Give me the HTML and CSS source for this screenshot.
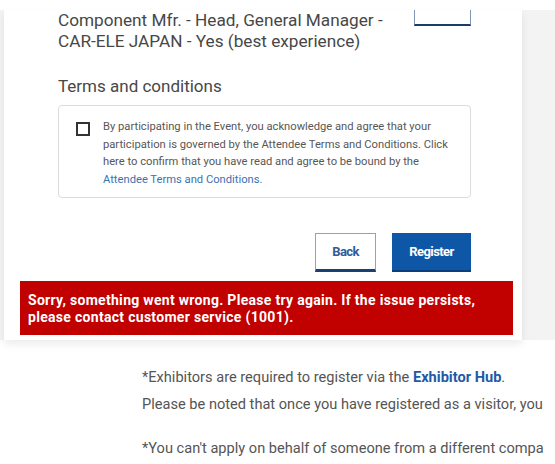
FILE: index.html
```html
<!DOCTYPE html>
<html>
<head>
    <title>Visitor registration</title>
    <link rel="stylesheet" href="styles.css">
</head>
<body>
    <div class="top-strip"></div>
    <div class="panel">
        <div class="card">
            <div class="form">
                <div class="answer-row">
                    <p class="answer">Component Mfr. - Head, General Manager - CAR-ELE JAPAN - Yes (best experience)</p>
                    <div class="edit-stub"></div>
                </div>

                <h2 class="section-title">Terms and conditions</h2>
                <label class="terms-box">
                    <span class="checkbox"></span>
                    <span class="terms-text">By participating in the Event, you acknowledge and agree that your participation is governed by the Attendee Terms and Conditions. Click here to confirm that you have read and agree to be bound by the <a href="#" class="terms-link">Attendee Terms and Conditions.</a></span>
                </label>

                <div class="actions">
                    <button type="button" class="btn btn-back">Back</button>
                    <button type="submit" class="btn btn-register">Register</button>
                </div>
            </div>
            <div class="alert">Sorry, something went wrong. Please try again. If the issue persists, please contact customer service (1001).</div>
        </div>
    </div>

    <div class="notes">
        <p>*Exhibitors are required to register via the <a href="#" class="hub-link">Exhibitor Hub</a>.<br>
        Please be noted that once you have registered as a visitor, you</p>
        <p>*You can't apply on behalf of someone from a different compa</p>
    </div>
</body>
</html>
```

FILE: styles.css
```css
html, body {
    overflow: hidden;
}
body {
    margin: 0;
    padding: 0;
    background-color: #fff;
    font-family: Roboto, "Liberation Sans", sans-serif;
    color: #4a4a4a;
}
.top-strip {
    height: 10px;
    background-color: #fff;
}
.panel {
    background-color: #f3f3f3;
    padding-left: 4px;
}
.card {
    width: 518px;
    background-color: #fff;
    padding-bottom: 5px;
    box-shadow: 0 4px 8px rgba(0, 0, 0, 0.08);
}
.form {
    padding: 0 51px 0 54px;
}
.answer-row {
    display: flex;
    justify-content: space-between;
    align-items: flex-start;
}
.answer {
    margin: 0;
    width: 345px;
    font-size: 17.2px;
    line-height: 21px;
    color: #474747;
}
.edit-stub {
    width: 55px;
    height: 14px;
    border: 1px solid #8094b5;
    border-top: none;
    border-bottom: 2px solid #1d3a6b;
}
.section-title {
    margin: 23px 0 8px;
    font-size: 17px;
    line-height: 22px;
    font-weight: normal;
    color: #474747;
}
.terms-box {
    display: flex;
    gap: 13px;
    padding: 12px 10px 8px 17px;
    border: 1px solid #dcdcdc;
    border-radius: 4px;
}
.checkbox {
    flex: none;
    width: 10px;
    height: 10px;
    margin-top: 4px;
    border: 2px solid #333;
}
.terms-text {
    font-size: 11.2px;
    line-height: 17.7px;
    color: #575757;
}
.terms-link {
    color: #3a72b4;
    text-decoration: none;
}
.actions {
    display: flex;
    justify-content: flex-end;
    gap: 16px;
    margin-top: 35px;
}
.btn {
    height: 39px;
    font-family: Roboto, "Liberation Sans", sans-serif;
    font-size: 13px;
    font-weight: bold;
    letter-spacing: -0.6px;
    cursor: pointer;
}
.btn-back {
    width: 61px;
    background-color: #fff;
    color: #2d5c9c;
    border: 1px solid #8ea3c4;
    border-bottom: 3px solid #1b3f73;
}
.btn-register {
    width: 79px;
    background-color: #0d57a6;
    color: #fff;
    border: none;
    border-bottom: 2px solid #0a3f7a;
}
.alert {
    margin: 9px 9px 0 16px;
    padding: 11px 8px 9px;
    background-color: #c10000;
    color: #fff;
    font-size: 14px;
    font-weight: bold;
    line-height: 17px;
    letter-spacing: 0.3px;
}
.notes {
    padding: 24px 0 0 142px;
    font-size: 14.6px;
    line-height: 27px;
    color: #555;
    white-space: nowrap;
}
.notes p {
    margin: 0 0 17px;
}
.hub-link {
    color: #1f5aa6;
    font-weight: bold;
    text-decoration: none;
}
```
